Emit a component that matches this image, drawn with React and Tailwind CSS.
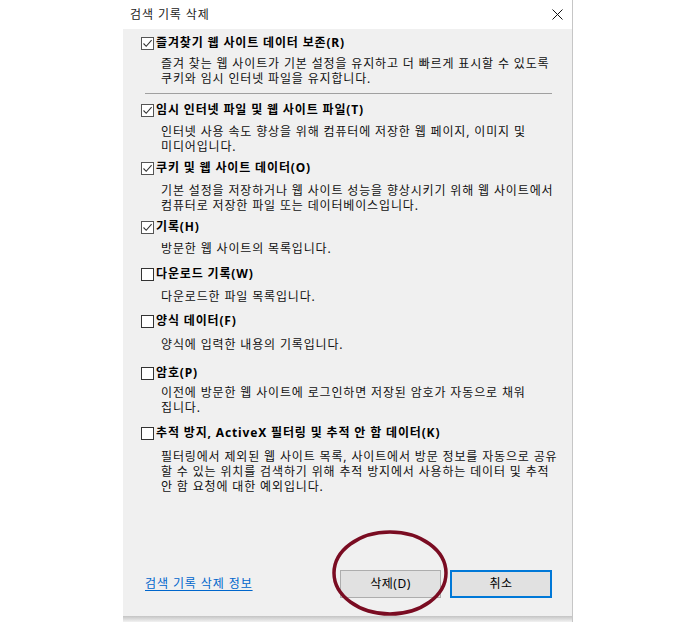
import React from "react";

const ITEMS = [
  {
    label: "즐겨찾기 웹 사이트 데이터 보존(R)",
    checked: true,
    mt: "mt-[6px]",
    dmt: "mt-[5px]",
    lines: [
      "즐겨 찾는 웹 사이트가 기본 설정을 유지하고 더 빠르게 표시할 수 있도록",
      "쿠키와 임시 인터넷 파일을 유지합니다.",
    ],
  },
  {
    label: "임시 인터넷 파일 및 웹 사이트 파일(T)",
    checked: true,
    mt: "mt-[8px]",
    dmt: "mt-[6px]",
    lines: ["인터넷 사용 속도 향상을 위해 컴퓨터에 저장한 웹 페이지, 이미지 및", "미디어입니다."],
  },
  {
    label: "쿠키 및 웹 사이트 데이터(O)",
    checked: true,
    mt: "mt-[6px]",
    dmt: "mt-[7px]",
    lines: [
      "기본 설정을 저장하거나 웹 사이트 성능을 향상시키기 위해 웹 사이트에서",
      "컴퓨터로 저장한 파일 또는 데이터베이스입니다.",
    ],
  },
  {
    label: "기록(H)",
    checked: true,
    mt: "mt-[6px]",
    dmt: "mt-[6px]",
    lines: ["방문한 웹 사이트의 목록입니다."],
  },
  {
    label: "다운로드 기록(W)",
    checked: false,
    mt: "mt-[10px]",
    dmt: "mt-[7px]",
    lines: ["다운로드한 파일 목록입니다."],
  },
  {
    label: "양식 데이터(F)",
    checked: false,
    mt: "mt-[9px]",
    dmt: "mt-[8px]",
    lines: ["양식에 입력한 내용의 기록입니다."],
  },
  {
    label: "암호(P)",
    checked: false,
    mt: "mt-[13px]",
    dmt: "mt-[4px]",
    lines: ["이전에 방문한 웹 사이트에 로그인하면 저장된 암호가 자동으로 채워", "집니다."],
  },
  {
    label: "추적 방지, ActiveX 필터링 및 추적 안 함 데이터(K)",
    checked: false,
    mt: "mt-[10px]",
    dmt: "mt-[8px]",
    lines: [
      "필터링에서 제외된 웹 사이트 목록, 사이트에서 방문 정보를 자동으로 공유",
      "할 수 있는 위치를 검색하기 위해 추적 방지에서 사용하는 데이터 및 추적",
      "안 함 요청에 대한 예외입니다.",
    ],
  },
];

function CheckBox({ checked }) {
  return (
    <span
      className={`w-[13px] h-[13px] shrink-0 border bg-white flex items-center justify-center ${
        checked ? "border-[#555]" : "border-[#333]"
      }`}
    >
      {checked && (
        <svg width="11" height="11" viewBox="0 0 11 11" fill="none">
          <path d="M1.5 5.5 L4.2 8.3 L9.6 2.2" stroke="#333" strokeWidth="1.1" />
        </svg>
      )}
    </span>
  );
}

function Option({ item }) {
  return (
    <div className={item.mt}>
      <div className="flex items-center h-[16px] pl-[18px] gap-[2px]">
        <CheckBox checked={item.checked} />
        <span className="text-[12px] font-bold leading-[16px] tracking-[0.85px] text-black whitespace-nowrap">
          {item.label}
        </span>
      </div>
      <div className={`${item.dmt} pl-[38px] text-[12px] leading-[15px] tracking-[0.85px] text-[#111]`}>
        {item.lines.map((l) => (
          <div key={l} className="whitespace-nowrap">
            {l}
          </div>
        ))}
      </div>
    </div>
  );
}

export default function App() {
  return (
    <div className="relative w-[696px] h-[622px] bg-white overflow-hidden font-['Noto_Sans','Noto_Sans_CJK_KR',sans-serif]">
      <div className="ml-[123px] w-[450px] flex flex-col border-r border-[#c6c6c6]">
        {/* title bar */}
        <div className="h-[29px] bg-white flex items-center justify-between pl-[7px] pr-[9px]">
          <span className="text-[12px] tracking-[0.9px] text-[#222]">검색 기록 삭제</span>
          <svg width="11" height="11" viewBox="0 0 11 11">
            <path d="M0.5 0.5 L10.5 10.5 M10.5 0.5 L0.5 10.5" stroke="#111" strokeWidth="1" />
          </svg>
        </div>

        {/* content */}
        <div className="h-[587px] bg-[#f0f0f0] flex flex-col">
          <Option item={ITEMS[0]} />
          <div className="mt-[7px] ml-[22px] mr-[20px] h-px bg-[#a0a0a0]" />
          {ITEMS.slice(1).map((it) => (
            <Option key={it.label} item={it} />
          ))}

          {/* footer */}
          <div className="mt-auto mb-[18px] flex items-center pl-[22px] pr-[20px]">
            <a className="text-[12px] tracking-[0.9px] text-[#0066cc] underline underline-offset-2 cursor-pointer">
              검색 기록 삭제 정보
            </a>
            <div className="ml-auto flex gap-[9px]">
              <button className="w-[101px] h-[28px] bg-[#e1e1e1] border border-[#adadad] text-[12px] tracking-[0.5px] text-black">
                삭제(D)
              </button>
              <button className="w-[102px] h-[28px] bg-[#e1e1e1] border-2 border-[#0078d7] text-[12px] tracking-[0.5px] text-black">
                취소
              </button>
            </div>
          </div>
        </div>
        <div className="h-[6px] bg-gradient-to-b from-[#c4c4c4] to-[#f2f2f2]" />
      </div>

      {/* annotation circle */}
      <svg className="absolute left-0 top-0 pointer-events-none" width="696" height="622">
        <ellipse cx="390" cy="573" rx="56" ry="41" fill="none" stroke="#7a0c22" strokeWidth="3.5" />
      </svg>
    </div>
  );
}
